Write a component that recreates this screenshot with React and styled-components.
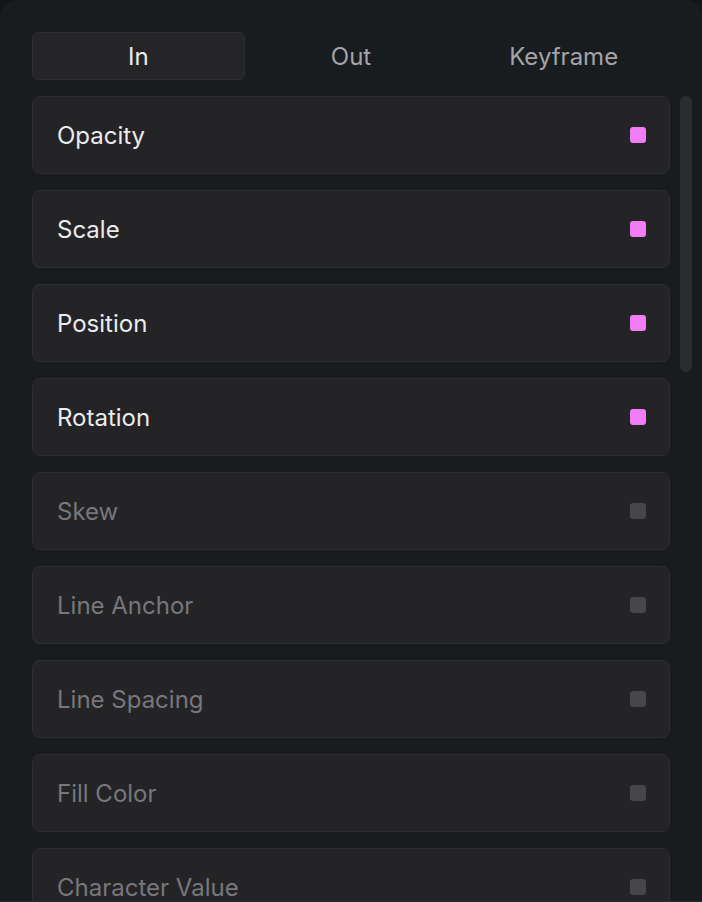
import React from "react";
import styled, { createGlobalStyle } from "styled-components";

const Global = createGlobalStyle`
  html, body { margin: 0; padding: 0; background: #131518; }
  body { font-family: Inter, "Noto Sans", sans-serif; -webkit-font-smoothing: antialiased; }
  * { box-sizing: border-box; }
`;

const Panel = styled.div`
  width: 702px;
  height: 902px;
  background: #191c1f;
  border-radius: 16px 16px 0 0;
  border-bottom: 1px solid #2a2b2f;
  padding: 32px 32px 0;
  overflow: hidden;
  display: flex;
  flex-direction: column;
  gap: 16px;
`;

const Tabs = styled.div`
  display: grid;
  grid-template-columns: repeat(3, 1fr);
  height: 48px;
  flex-shrink: 0;
`;

const Tab = styled.button`
  all: unset;
  display: flex;
  align-items: center;
  justify-content: center;
  border-radius: 6px;
  font-family: Inter, sans-serif;
  font-size: 24px;
  font-weight: 400;
  color: ${(p) => (p.$active ? "#ececee" : "#a3a3a8")};
  background: ${(p) => (p.$active ? "#252527" : "transparent")};
  border: 1px solid ${(p) => (p.$active ? "#2f2f33" : "transparent")};
`;

const Body = styled.div`
  display: flex;
  gap: 10px;
  margin-right: -22px;
  min-height: 0;
`;

const List = styled.div`
  flex: 1;
  display: flex;
  flex-direction: column;
  gap: 16px;
`;

const Track = styled.div`
  width: 12px;
  flex-shrink: 0;
`;

const Thumb = styled.div`
  width: 12px;
  height: 276px;
  border-radius: 6px;
  background: #2c2c30;
`;

const Row = styled.div`
  height: 78px;
  flex-shrink: 0;
  display: flex;
  align-items: center;
  justify-content: space-between;
  padding: 0 23px 0 24px;
  background: #242426;
  border: 1px solid #2e2e31;
  border-radius: 8px;
`;

const Label = styled.span`
  font-size: 24px;
  font-weight: 400;
  color: ${(p) => (p.$on ? "#ebebee" : "#77777c")};
`;

const Dot = styled.span`
  width: 16px;
  height: 16px;
  border-radius: 3px;
  background: ${(p) => (p.$on ? "#f17df6" : "#47474b")};
`;

const items = [
  ["Opacity", true],
  ["Scale", true],
  ["Position", true],
  ["Rotation", true],
  ["Skew", false],
  ["Line Anchor", false],
  ["Line Spacing", false],
  ["Fill Color", false],
  ["Character Value", false],
];

export default function App() {
  return (
    <>
      <Global />
      <Panel>
        <Tabs>
          <Tab $active>In</Tab>
          <Tab>Out</Tab>
          <Tab>Keyframe</Tab>
        </Tabs>
        <Body>
          <List>
            {items.map(([name, on]) => (
              <Row key={name}>
                <Label $on={on}>{name}</Label>
                <Dot $on={on} />
              </Row>
            ))}
          </List>
          <Track>
            <Thumb />
          </Track>
        </Body>
      </Panel>
    </>
  );
}
